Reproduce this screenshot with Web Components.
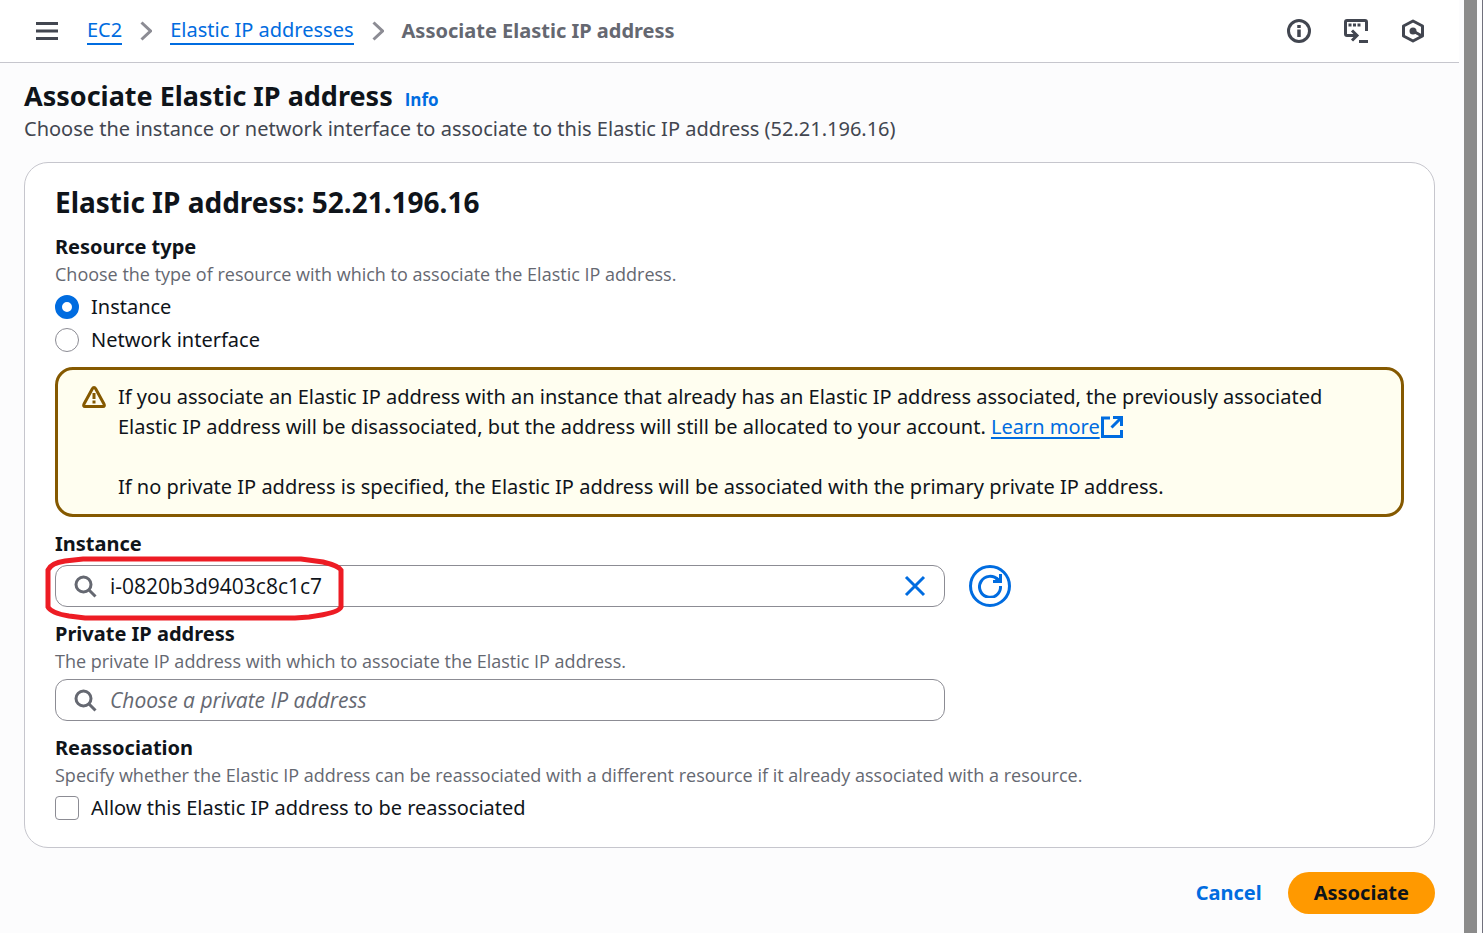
<!DOCTYPE html>
<html lang="en">
<head>
<meta charset="utf-8">
<title>Associate Elastic IP address</title>
<style>
  :root {
    --ink: #0f141a;
    --body: #424650;
    --muted: #656871;
    --link: #006ce0;
    --line: #c6c6cd;
    --control: #8c8c94;
    --narrow: "Open Sans", "Noto Sans", sans-serif;
  }
  html, body { margin: 0; height: 100%; }
  body { background: #fcfcfd; color: var(--ink); font: 20px/30px "Noto Sans", "Open Sans", sans-serif; }
  warning-alert p { margin: 0; }
  warning-alert p + p { margin-top: 30px; }
</style>
</head>
<body>
<console-page>
  <top-bar slot="top"></top-bar>
  <page-heading slot="heading" info="Info">
    Associate Elastic IP address
    <span slot="description">Choose the instance or network interface to associate to this Elastic IP address (52.21.196.16)</span>
  </page-heading>
  <form-card>
    <span slot="title">Elastic IP address: 52.21.196.16</span>
    <resource-type></resource-type>
    <warning-alert>
      <p>If you associate an Elastic IP address with an instance that already has an Elastic IP address associated, the previously associated Elastic IP address will be disassociated, but the address will still be allocated to your account. <external-link href="#learn">Learn more</external-link></p>
      <p>If no private IP address is specified, the Elastic IP address will be associated with the primary private IP address.</p>
    </warning-alert>
    <search-field label="Instance" value="i-0820b3d9403c8c1c7" marked>
      <refresh-button slot="action"></refresh-button>
    </search-field>
    <search-field label="Private IP address" description="The private IP address with which to associate the Elastic IP address." placeholder="Choose a private IP address"></search-field>
    <reassociation-field></reassociation-field>
  </form-card>
  <form-actions slot="actions"></form-actions>
</console-page>

<script>
const define = (name, html, setup) => {
  const template = document.createElement('template');
  template.innerHTML = html;
  customElements.define(name, class extends HTMLElement {
    constructor() {
      super();
      this.attachShadow({ mode: 'open' }).append(template.content.cloneNode(true));
    }
    connectedCallback() { if (setup) setup(this, this.shadowRoot); }
  });
};

const fieldText = `
  .label { display: block; padding: 0; font-weight: 700; line-height: 30px; color: var(--ink); }
  .description { margin: 0; font: 18px/24px var(--narrow); color: var(--muted); }
  .description:empty { display: none; }
  fieldset { margin: 0; padding: 0; border: 0; min-width: 0; }
`;

define('console-page', `
  <style>
    :host { display: flex; min-height: 100%; }
    .page { flex: 1; min-width: 0; }
    main { padding: 15px 24px 16px; }
    ::slotted(form-card) { margin-top: 18px; }
    .rail { flex: none; box-sizing: border-box; width: 24px; padding: 0 5px; border-right: 1px solid #70707c; }
    .thumb { width: 13px; height: 100%; background: #8b8b8b; }
  </style>
  <div class="page">
    <slot name="top"></slot>
    <main><slot name="heading"></slot><slot></slot><slot name="actions"></slot></main>
  </div>
  <div class="rail"><div class="thumb"></div></div>
`);

define('top-bar', `
  <style>
    :host { display: block; background: #fff; border-bottom: 1px solid var(--line); }
    header { display: flex; align-items: center; height: 62px; padding: 0 32px 0 33px; }
    button { display: flex; padding: 2px; border: 0; background: none; color: var(--body); }
    svg { display: block; fill: none; stroke: currentColor; }
    nav { flex: 1; min-width: 0; }
    ol { display: flex; align-items: center; margin: 0 0 0 26px; padding: 0; list-style: none; white-space: nowrap; }
    li { display: flex; align-items: center; }
    a { color: var(--link); text-decoration: none; border-bottom: 2px solid; line-height: 26px; }
    li svg { margin: 0 18px; color: var(--control); }
    .current { font-weight: 700; color: var(--muted); }
    .tools { display: flex; gap: 29px; }
  </style>
  <header>
    <button aria-label="Open navigation"><svg width="24" height="24" stroke-width="3"><path d="M1 4.500h22M1 12h22M1 19.500h22"/></svg></button>
    <nav aria-label="Breadcrumbs"><ol>
      <li><a href="#ec2">EC2</a><svg width="12" height="20" stroke-width="3"><path d="M1.500 1.500l9 8.500l-9 8.500"/></svg></li>
      <li><a href="#addresses">Elastic IP addresses</a><svg width="12" height="20" stroke-width="3"><path d="M1.500 1.500l9 8.500l-9 8.500"/></svg></li>
      <li class="current" aria-current="page">Associate Elastic IP address</li>
    </ol></nav>
    <div class="tools">
      <button aria-label="Info"><svg width="24" height="24" stroke-width="3"><circle cx="12" cy="12" r="10.500"/><path d="M12 6v3M12 10.500v7.500" stroke-width="3.500"/></svg></button>
      <button aria-label="CloudShell"><svg width="24" height="24" stroke-width="3"><path d="M7 16.500H3Q1.500 16.500 1.500 15V3Q1.500 1.500 3 1.500H21Q22.500 1.500 22.500 3V12M5 16.500H13M8 11.500L13 16.500L8 21.500M15 22.500H24"/><path d="M4.500 6h12.500" stroke-dasharray="3 1.500"/></svg></button>
      <button aria-label="Tutorials"><svg width="24" height="24" stroke-width="3"><path d="M12 2L21.500 7V17L12 22L2.500 17V7Z" stroke-linejoin="round"/><path d="M12 12L21 17"/><circle cx="12" cy="12" r="3.500" fill="currentColor" stroke="none"/></svg></button>
    </div>
  </header>
`);

define('page-heading', `
  <style>
    :host { display: block; }
    .row { display: flex; align-items: baseline; gap: 12px; }
    h1 { margin: 0; font-size: 27px; line-height: 36px; }
    a { color: var(--link); font: 700 17px/20px var(--narrow); text-decoration: none; }
    p { margin: 0; color: var(--body); }
  </style>
  <div class="row"><h1><slot></slot></h1><a href="#info"></a></div>
  <p><slot name="description"></slot></p>
`, (host, root) => { root.querySelector('a').textContent = host.getAttribute('info'); });

define('form-card', `
  <style>
    :host { display: block; background: #fff; border: 1px solid var(--line); border-radius: 24px; padding: 21px 30px 24px; }
    h2 { margin: 0 0 12px; font-size: 28px; line-height: 36px; }
    .fields { display: flex; flex-direction: column; gap: 12px; }
  </style>
  <h2><slot name="title"></slot></h2>
  <div class="fields"><slot></slot></div>
`);

define('resource-type', `
  <style>${fieldText}
    :host { display: block; }
    .options { display: grid; gap: 3px; margin-top: 6px; }
    .options label { display: flex; align-items: center; gap: 12px; }
    input { appearance: none; box-sizing: border-box; flex: none; width: 24px; height: 24px; margin: 0; border: 1px solid var(--control); border-radius: 50%; background: #fff; }
    input:checked { border: 7px solid var(--link); }
  </style>
  <fieldset aria-describedby="hint">
    <legend class="label">Resource type</legend>
    <p class="description" id="hint">Choose the type of resource with which to associate the Elastic IP address.</p>
    <div class="options">
      <label><input type="radio" name="resource" checked>Instance</label>
      <label><input type="radio" name="resource">Network interface</label>
    </div>
  </fieldset>
`);

define('warning-alert', `
  <style>
    :host { display: flex; gap: 12px; padding: 12px 24px; border: 3px solid #855900; border-radius: 18px; background: #fffef0; }
    svg { flex: none; margin-top: 3px; fill: none; stroke: #855900; stroke-width: 3; stroke-linejoin: round; }
  </style>
  <svg width="24" height="24" aria-hidden="true"><path d="M12 2.500Q13 2.500 13.500 3.500L22 19Q23 21.500 21 21.500H3Q1 21.500 2 19L10.500 3.500Q11 2.500 12 2.500Z"/><path d="M12 8v6M12 15.500v3"/></svg>
  <div><slot></slot></div>
`);

define('external-link', `
  <style>
    a { color: var(--link); text-decoration: none; white-space: nowrap; }
    span { text-decoration: underline; text-decoration-thickness: 2px; text-underline-offset: 3px; }
    svg { vertical-align: -4px; margin-left: 1px; fill: none; stroke: currentColor; stroke-width: 3; }
  </style>
  <a><span><slot></slot></span><svg width="22" height="22" aria-hidden="true"><path d="M9 2H1.500V20.500H20.500V14M12 1.500H20.500V10M20 2L10.500 11.500"/></svg></a>
`, (host, root) => { root.querySelector('a').href = host.getAttribute('href'); });

define('search-field', `
  <style>${fieldText}
    :host { display: block; }
    .row { display: flex; align-items: center; gap: 24px; margin-top: 6px; }
    .box { position: relative; box-sizing: border-box; display: flex; align-items: center; gap: 13px; width: 66%; height: 42px; padding: 0 18px; border: 1px solid var(--control); border-radius: 12px; background: #fff; }
    svg { display: block; flex: none; fill: none; stroke: currentColor; }
    .search { color: var(--muted); }
    input { flex: 1; min-width: 0; padding: 0; border: 0; outline: 0; background: none; color: var(--ink); font: 21px/30px var(--narrow); }
    input::placeholder { color: var(--muted); font-style: italic; opacity: 1; }
    button { display: flex; padding: 0; border: 0; background: none; color: var(--link); }
    .mark { position: absolute; left: -11px; top: -10px; color: #ed1c24; pointer-events: none; }
    :host(:not([marked])) .mark, :host(:not([value])) button { display: none; }
  </style>
  <label class="label" for="control"></label>
  <p class="description" id="hint"></p>
  <div class="row">
    <div class="box">
      <svg class="search" width="23" height="24" stroke-width="3"><circle cx="9.500" cy="10.500" r="7.500"/><path d="M15 16L21.500 22.500"/></svg>
      <input id="control" type="text" aria-describedby="hint">
      <button aria-label="Clear"><svg width="22" height="22" stroke-width="3"><path d="M2 2L20 20M20 2L2 20"/></svg></button>
      <svg class="mark" width="300" height="66" stroke-width="5"><path d="M3 14Q6 7 20 5L38 3H256L278 6Q294 10 296 14V51Q294 57 264 61L250 62H40L24 60Q6 57 3 51Z"/></svg>
    </div>
    <slot name="action"></slot>
  </div>
`, (host, root) => {
  const get = name => host.getAttribute(name) || '';
  const input = root.querySelector('input');
  root.querySelector('label').textContent = get('label');
  root.querySelector('p').textContent = get('description');
  input.value = get('value');
  input.placeholder = get('placeholder');
});

define('refresh-button', `
  <style>
    :host { display: block; }
    button { display: grid; place-items: center; box-sizing: border-box; width: 42px; height: 42px; padding: 0; border: 3px solid var(--link); border-radius: 50%; background: #fff; color: var(--link); }
    svg { display: block; fill: none; stroke: currentColor; stroke-width: 3; }
  </style>
  <button aria-label="Refresh instances"><svg width="24" height="24"><path d="M22.500 12A10.500 10.500 0 1 1 20 6"/><path d="M22.500 0V7.500H15M22 7L18 4"/></svg></button>
`);

define('reassociation-field', `
  <style>${fieldText}
    :host { display: block; }
    .option { display: flex; align-items: center; gap: 12px; margin-top: 6px; }
    input { appearance: none; box-sizing: border-box; flex: none; width: 24px; height: 24px; margin: 0; border: 1px solid var(--control); border-radius: 4px; background: #fff; }
  </style>
  <fieldset aria-describedby="hint">
    <legend class="label">Reassociation</legend>
    <p class="description" id="hint">Specify whether the Elastic IP address can be reassociated with a different resource if it already associated with a resource.</p>
    <label class="option"><input type="checkbox">Allow this Elastic IP address to be reassociated</label>
  </fieldset>
`);

define('form-actions', `
  <style>
    :host { display: flex; justify-content: flex-end; margin-top: 24px; }
    button { height: 42px; padding: 0 26px; border: 0; border-radius: 21px; background: none; color: var(--link); font: inherit; font-weight: 700; }
    .primary { background: #ff9900; color: var(--ink); }
  </style>
  <button>Cancel</button><button class="primary">Associate</button>
`);
</script>
</body>
</html>
